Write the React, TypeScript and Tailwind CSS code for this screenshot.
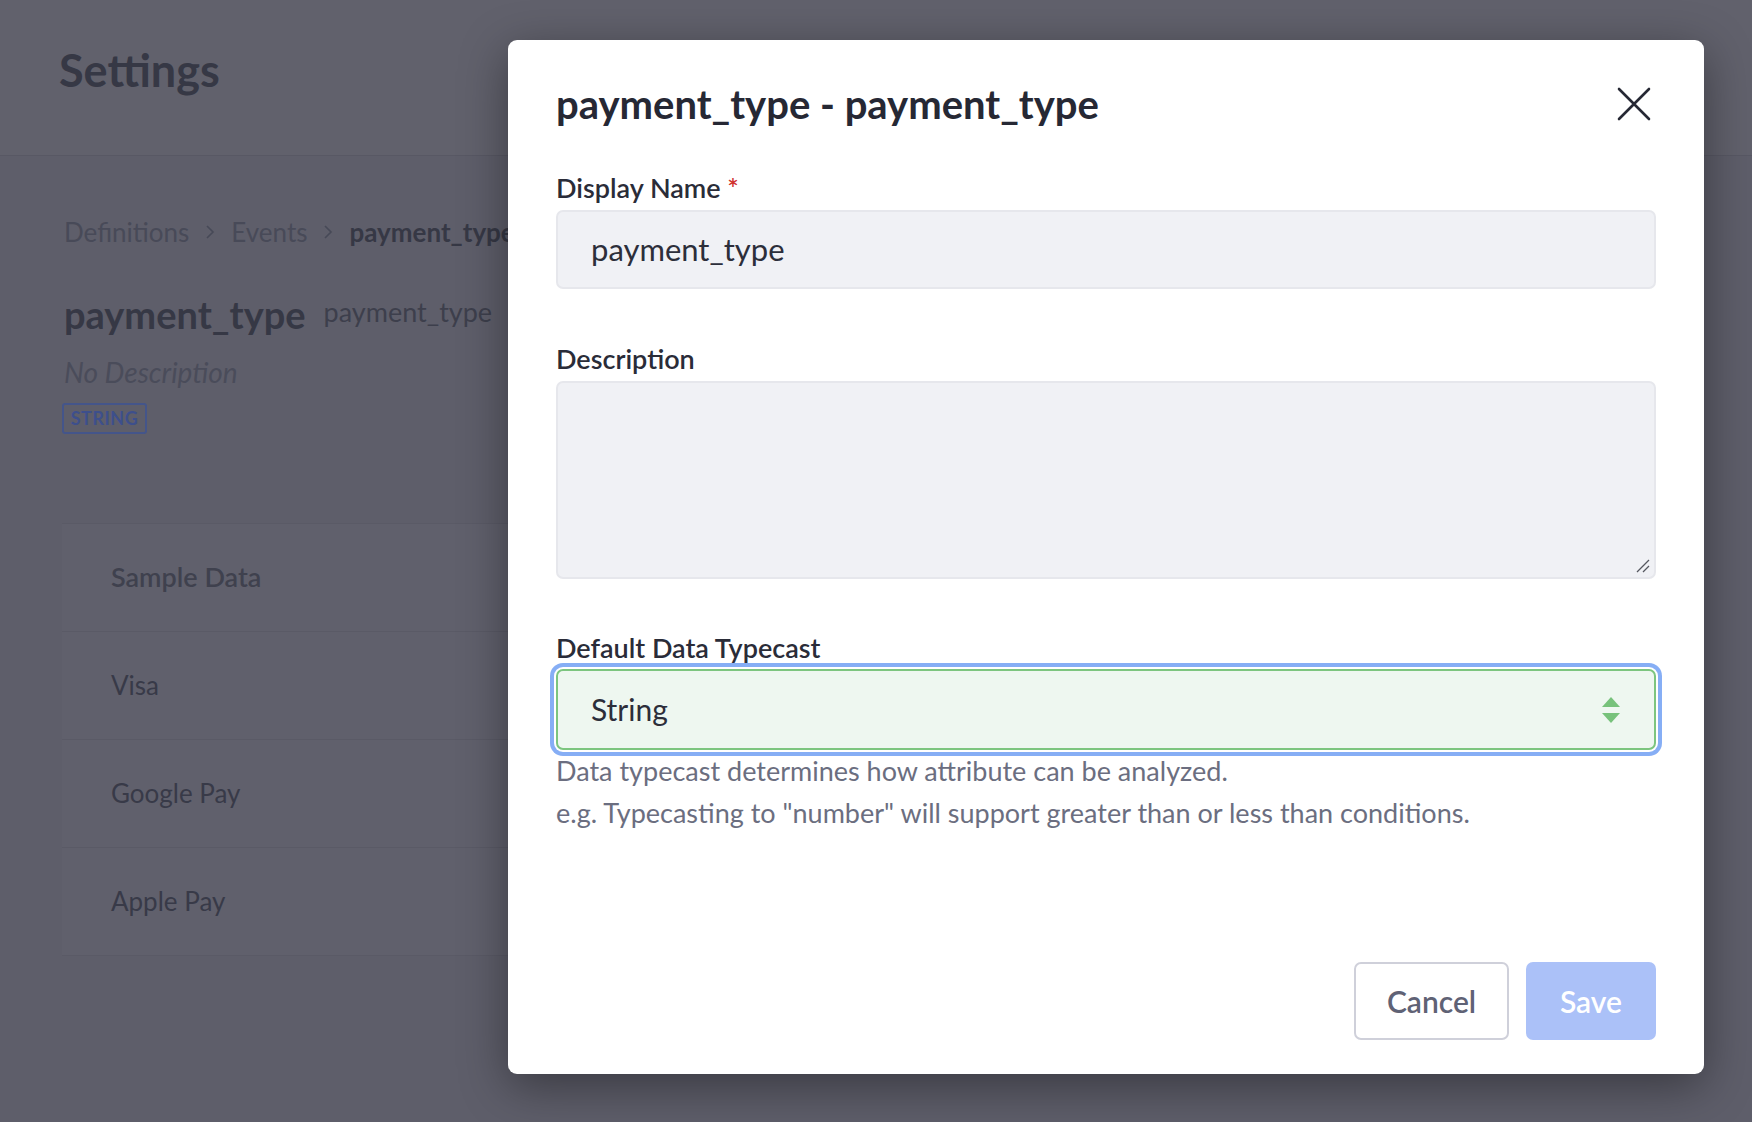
import React from "react";

const font = { fontFamily: "Lato, 'Noto Sans', sans-serif" };

function Chevron() {
  return (
    <svg width="12" height="18" viewBox="0 0 12 18" className="mx-[15px]">
      <path d="M3 3 L9 9 L3 15" fill="none" stroke="#474957" strokeWidth="1.6" />
    </svg>
  );
}

export default function App() {
  return (
    <div className="relative w-[1752px] h-[1122px] overflow-hidden bg-[#5e5e6a]" style={font}>
      {/* Background page (dimmed) */}
      <div className="h-[156px] bg-[#61616c] border-b border-[#585864] pl-[59px] pt-[44px]">
        <div className="text-[45px] leading-[52px] font-bold text-[#363845]">Settings</div>
      </div>
      <div className="pl-[64px]">
        <div className="mt-[60px] flex items-center text-[26px] leading-[32px] text-[#484a58]">
          <span>Definitions</span>
          <Chevron />
          <span>Events</span>
          <Chevron />
          <span className="font-bold text-[#363845]">payment_type</span>
        </div>
        <div className="mt-[43px] flex items-start">
          <span className="text-[38px] leading-[46px] font-bold text-[#363845]">payment_type</span>
          <span className="ml-[18px] mt-[5px] text-[27px] leading-[32px] text-[#3d3f4c]">payment_type</span>
        </div>
        <div className="mt-[19px] text-[28px] leading-[32px] italic text-[#4a4c5a]">No Description</div>
        <div className="mt-[15px] ml-[-2px] w-[85px] h-[31px] flex items-center justify-center rounded-[3px] border-2 border-[#44558a] text-[18px] font-bold tracking-[0.5px] text-[#3d4f8c]">
          STRING
        </div>
        <div className="mt-[89px] ml-[-2px] w-[1628px] bg-[#60606c]">
          <div className="h-[108px] flex items-center pl-[49px] border-t border-[#5a5a66] text-[27px] font-semibold text-[#3f414e]">
            Sample Data
          </div>
          {["Visa", "Google Pay", "Apple Pay"].map((t) => (
            <div
              key={t}
              className="h-[108px] flex items-center pl-[49px] border-t border-[#5a5a66] text-[26px] text-[#383a48]"
            >
              {t}
            </div>
          ))}
          <div className="border-t border-[#5a5a66]" />
        </div>
      </div>

      {/* Modal */}
      <div className="absolute left-[508px] top-[40px] w-[1196px] h-[1034px] bg-white rounded-[9px] shadow-[0_12px_48px_rgba(0,0,0,0.4)] flex flex-col px-[48px] pt-[40px] pb-[34px]">
        <div className="flex items-center justify-between">
          <div className="text-[40px] leading-[48px] font-bold text-[#262834]">payment_type - payment_type</div>
          <svg width="36" height="36" viewBox="0 0 36 36" className="mr-[4px]">
            <path d="M3 3 L33 33 M33 3 L3 33" stroke="#262834" strokeWidth="2.6" strokeLinecap="round" />
          </svg>
        </div>

        <div className="mt-[44px] text-[27px] leading-[32px] font-semibold text-[#2a2c38]">
          Display Name <span className="text-[#d0312d]">*</span>
        </div>
        <div className="mt-[6px] h-[79px] rounded-[7px] border-2 border-[#e6e7ec] bg-[#f0f1f5] flex items-center pl-[33px] text-[31px] text-[#2c2e3a]">
          payment_type
        </div>

        <div className="mt-[54px] text-[27px] leading-[32px] font-semibold text-[#2a2c38]">Description</div>
        <div className="relative mt-[6px] h-[198px] rounded-[7px] border-2 border-[#e6e7ec] bg-[#f0f1f5]">
          <svg width="14" height="14" viewBox="0 0 14 14" className="absolute right-[4px] bottom-[4px]">
            <path d="M13 1 L1 13 M13 7 L7 13" stroke="#55575f" strokeWidth="1.3" />
          </svg>
        </div>

        <div className="mt-[53px] text-[27px] leading-[32px] font-semibold text-[#2a2c38]">Default Data Typecast</div>
        <div className="mt-[5px] h-[81px] rounded-[7px] border-2 border-[#7cc57f] bg-[#eef7f0] shadow-[0_0_0_2px_#ffffff,0_0_0_6px_#86aef5] flex items-center justify-between pl-[33px] pr-[33px] text-[30px] text-[#2c2e3a]">
          <span>String</span>
          <svg width="20" height="26" viewBox="0 0 20 26">
            <path d="M10 0 L19 10 L1 10 Z" fill="#77c27b" />
            <path d="M1 16 L19 16 L10 26 Z" fill="#77c27b" />
          </svg>
        </div>
        <div className="text-[27px] leading-[42px] text-[#6b6e80]">
          <p>Data typecast determines how attribute can be analyzed.</p>
          <p>e.g. Typecasting to "number" will support greater than or less than conditions.</p>
        </div>

        <div className="mt-auto flex justify-end gap-[17px]">
          <button className="w-[155px] h-[78px] rounded-[7px] border-2 border-[#cfd0da] bg-white text-[30px] font-semibold text-[#5f6275]">
            Cancel
          </button>
          <button className="w-[130px] h-[78px] rounded-[7px] bg-[#abc1f8] text-[30px] font-semibold text-white">
            Save
          </button>
        </div>
      </div>
    </div>
  );
}
